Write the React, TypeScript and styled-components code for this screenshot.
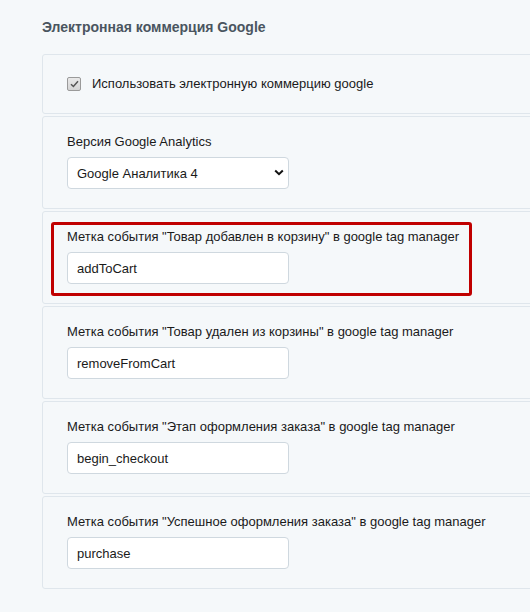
import styled, { createGlobalStyle } from "styled-components";

const GlobalStyle = createGlobalStyle`
  html, body {
    margin: 0;
    background: #f5f8fa;
    overflow: hidden;
  }
  body {
    font-family: "Liberation Sans", Arial, sans-serif;
    color: #1a1a1a;
  }
`;

const Page = styled.div`
  box-sizing: border-box;
  width: 100%;
  overflow: hidden;
  padding: 19px 0 0 42px;
`;

const Title = styled.h3`
  margin: 0 0 19px;
  font-size: 14px;
  line-height: 16px;
  font-weight: bold;
  color: #4a5560;
`;

const Rows = styled.div`
  width: 520px;
  display: flex;
  flex-direction: column;
  gap: 2px;
`;

const Row = styled.div<{ $compact?: boolean }>`
  position: relative;
  border: 1px solid #dfe6ec;
  border-radius: 3px;
  background: #f5f8fa;
  padding: ${(p) => (p.$compact ? "0 24px" : "17px 24px 19px")};
  height: ${(p) => (p.$compact ? "58px" : "auto")};
  display: flex;
  flex-direction: ${(p) => (p.$compact ? "row" : "column")};
  align-items: ${(p) => (p.$compact ? "center" : "flex-start")};
`;

const CheckLabel = styled.label`
  display: flex;
  align-items: center;
  gap: 11px;
  font-size: 13px;
  line-height: 16px;
`;

const CheckBox = styled.span`
  width: 14px;
  height: 14px;
  box-sizing: border-box;
  border: 1px solid #9a9a9a;
  border-radius: 2px;
  background: linear-gradient(#e9e9e9, #d4d4d4);
  display: flex;
  align-items: center;
  justify-content: center;
`;

const FieldLabel = styled.label`
  display: block;
  font-size: 13px;
  line-height: 16px;
  margin-bottom: 7px;
`;

const TextInput = styled.input`
  box-sizing: border-box;
  width: 222px;
  height: 32px;
  padding: 0 9px;
  border: 1px solid #cfd8df;
  border-radius: 4px;
  background: #fff;
  font-family: "Liberation Sans", Arial, sans-serif;
  font-size: 13px;
  color: #1a1a1a;
  outline: none;
`;

const SelectWrap = styled.div`
  position: relative;
  width: 222px;
`;

const Select = styled.select`
  appearance: none;
  box-sizing: border-box;
  width: 100%;
  height: 32px;
  padding: 0 9px;
  border: 1px solid #cfd8df;
  border-radius: 4px;
  background: #fff;
  font-family: "Liberation Sans", Arial, sans-serif;
  font-size: 13px;
  color: #1a1a1a;
  outline: none;
`;

const Chevron = styled.svg`
  position: absolute;
  right: 5px;
  top: 12px;
  pointer-events: none;
`;

const Highlight = styled.div`
  position: absolute;
  left: 8px;
  top: 10px;
  width: 421px;
  height: 74px;
  box-sizing: border-box;
  border: 3px solid #c00000;
  border-radius: 3px;
  pointer-events: none;
`;

const events = [
  { label: 'Метка события "Товар добавлен в корзину" в google tag manager', value: "addToCart", marked: true },
  { label: 'Метка события "Товар удален из корзины" в google tag manager', value: "removeFromCart" },
  { label: 'Метка события "Этап оформления заказа" в google tag manager', value: "begin_checkout" },
  { label: 'Метка события "Успешное оформления заказа" в google tag manager', value: "purchase" },
];

const App = () => {
  return (
    <>
      <GlobalStyle />
      <Page>
        <Title>Электронная коммерция Google</Title>
        <Rows>
          <Row $compact>
            <CheckLabel>
              <CheckBox>
                <svg width="9" height="8" viewBox="0 0 9 8">
                  <path d="M1 4.2 L3.4 6.5 L8 1.2" fill="none" stroke="#555" strokeWidth="1.5" />
                </svg>
              </CheckBox>
              Использовать электронную коммерцию google
            </CheckLabel>
          </Row>
          <Row>
            <FieldLabel>Версия Google Analytics</FieldLabel>
            <SelectWrap>
              <Select defaultValue="ga4">
                <option value="ua">Universal Analytics</option>
                <option value="ga4">Google Аналитика 4</option>
              </Select>
              <Chevron width="10" height="7" viewBox="0 0 10 7">
                <path d="M1.2 1.5 L5 5.2 L8.8 1.5" fill="none" stroke="#111" strokeWidth="2" />
              </Chevron>
            </SelectWrap>
          </Row>
          {events.map((e) => (
            <Row key={e.value}>
              <FieldLabel>{e.label}</FieldLabel>
              <TextInput type="text" defaultValue={e.value} />
              {e.marked && <Highlight />}
            </Row>
          ))}
        </Rows>
      </Page>
    </>
  );
};

export default App;
